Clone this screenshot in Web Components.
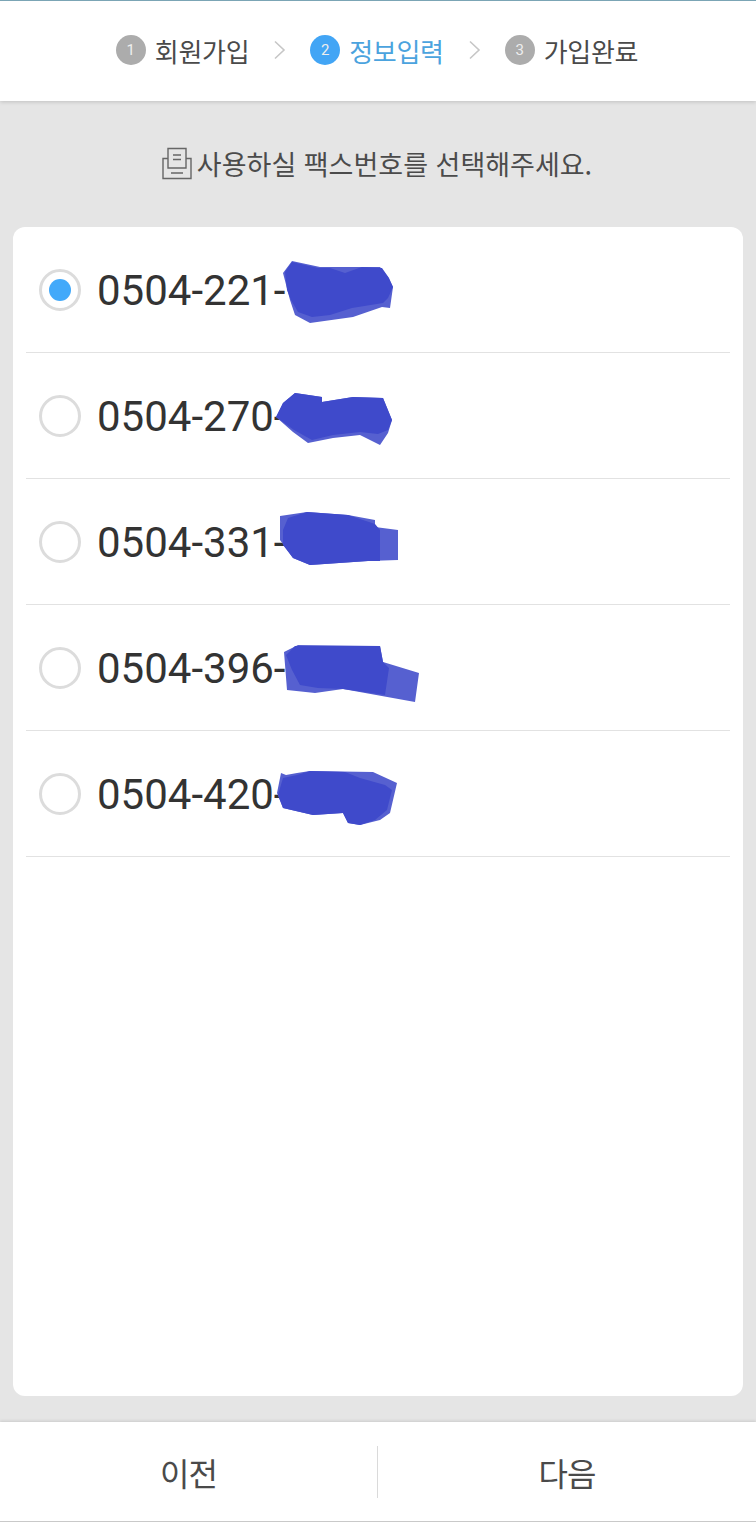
<!DOCTYPE html>
<html lang="ko">
<head>
<meta charset="utf-8">
<title>정보입력</title>
<style>
html, body { margin: 0; padding: 0; height: 100%; }
body { font-family: "Noto Sans CJK KR", Roboto, sans-serif; background: #e5e5e5; overflow: hidden; }
fax-app { height: 1522px; }
</style>
</head>
<body>
<fax-app>
  <wizard-header>
    <wizard-step num="1">회원가입</wizard-step>
    <step-arrow></step-arrow>
    <wizard-step num="2" active>정보입력</wizard-step>
    <step-arrow></step-arrow>
    <wizard-step num="3">가입완료</wizard-step>
  </wizard-header>
  <page-notice>사용하실 팩스번호를 선택해주세요.</page-notice>
  <fax-list>
    <fax-option checked top="227" scribble="292,261 320,267 380,267 388,277 393,287 390,308 382,307 353,317 310,323 295,315 290,300 283,273" core="292,262 318,268 330,268 345,273 362,267 382,268 389,278 393,287 388,298 383,303 352,308 330,315 312,317 298,312 291,300 287,290 285,272">0504-221-</fax-option>
    <fax-option top="353" scribble="295,393 322,397 322,402 353,397 383,398 392,420 388,433 380,445 360,435 333,438 308,443 293,432 276,417 283,403" core="295,393 322,397 322,402 353,397 383,398 392,420 388,430 378,434 360,432 333,435 312,440 294,430 276,417 283,403">0504-270-</fax-option>
    <fax-option top="479" scribble="280,516 307,512 348,515 375,520 375,527 398,530 398,560 368,561 310,565 293,558 280,540" core="288,518 307,512 348,515 360,519 375,524 380,530 380,561 368,561 310,565 293,558 283,545 283,530">0504-331-</fax-option>
    <fax-option top="605" scribble="284,652 298,645 380,646 383,662 419,673 415,702 343,689 315,693 287,690" core="295,646 380,646 383,662 389,668 385,695 343,689 318,688 300,685 292,670 286,655">0504-396-</fax-option>
    <fax-option top="731" scribble="281,773 286,775 297,773 310,771 373,772 397,783 390,813 380,820 360,825 348,823 343,813 313,815 283,808 277,793" core="283,778 297,775 310,771 345,772 360,778 385,785 392,790 387,810 375,820 360,825 348,823 343,813 313,815 283,808 278,795">0504-420-</fax-option>
  </fax-list>
  <bottom-bar>
    <bar-button>이전</bar-button>
    <bar-button>다음</bar-button>
  </bottom-bar>
</fax-app>

<script>
class FaxApp extends HTMLElement {
  constructor() {
    super();
    this.attachShadow({ mode: 'open' });
    this.shadowRoot.innerHTML = `
      <style>
        :host { display: flex; flex-direction: column; width: 756px; background: #e5e5e5; }
      </style>
      <slot></slot>`;
  }
}

class WizardHeader extends HTMLElement {
  constructor() {
    super();
    this.attachShadow({ mode: 'open' });
    this.shadowRoot.innerHTML = `
      <style>
        :host {
          display: flex; align-items: center; justify-content: center; gap: 24px;
          box-sizing: border-box; height: 101px; flex: none; padding: 0 2px 2px 0;
          background: #fff; border-top: 1px solid #7ba5b5;
          box-shadow: 0 1px 4px rgba(0,0,0,.16);
          position: relative; z-index: 1;
        }
      </style>
      <slot></slot>`;
  }
}

class WizardStep extends HTMLElement {
  constructor() {
    super();
    this.attachShadow({ mode: 'open' });
    this.shadowRoot.innerHTML = `
      <style>
        :host { display: flex; align-items: center; gap: 9px; color: #4a4a4a; font-size: 26px; letter-spacing: -.3px; }
        :host([active]) { color: #4ba3de; }
        .num {
          width: 30px; height: 30px; border-radius: 50%; background: #acacac; color: #eee;
          display: flex; align-items: center; justify-content: center;
          font: 15px Roboto, sans-serif; letter-spacing: 0;
        }
        :host([active]) .num { background: #42a5f5; }
      </style>
      <span class="num">${this.getAttribute('num')}</span>
      <slot></slot>`;
  }
}

class StepArrow extends HTMLElement {
  constructor() {
    super();
    this.attachShadow({ mode: 'open' });
    this.shadowRoot.innerHTML = `
      <style>:host { display: block; width: 13px; height: 20px; }</style>
      <svg width="13" height="20" viewBox="0 0 13 20" fill="none" stroke="#c6c6c6" stroke-width="1.6">
        <path d="M2 1.5 11 10 2 18.5"/>
      </svg>`;
  }
}

class PageNotice extends HTMLElement {
  constructor() {
    super();
    this.attachShadow({ mode: 'open' });
    this.shadowRoot.innerHTML = `
      <style>
        :host {
          display: flex; align-items: center; justify-content: center; gap: 5px;
          height: 126px; flex: none; padding: 0 2px 2px 0; box-sizing: border-box;
          color: #4b4b4b; font-size: 27px;
        }
        svg { flex: none; }
      </style>
      <svg width="30" height="33" viewBox="0 0 30 33" fill="none" stroke="#666" stroke-width="1.4">
        <path d="M6 11.5H1V31.5H29V11.5H24"/>
        <path d="M6 21V1.5H24V21H6Z"/>
        <path d="M11 8H19M11 12.5H19M9 26H21"/>
      </svg>
      <slot></slot>`;
  }
}

class FaxList extends HTMLElement {
  constructor() {
    super();
    this.attachShadow({ mode: 'open' });
    this.shadowRoot.innerHTML = `
      <style>
        :host {
          display: block; flex: 1; margin: 0 13px 26px; min-height: 0;
          background: #fff; border-radius: 12px;
        }
      </style>
      <slot></slot>`;
  }
}

class FaxOption extends HTMLElement {
  constructor() {
    super();
    this.attachShadow({ mode: 'open' });
    // 낙서 좌표는 스크린샷 기준이라 행 위치만큼 viewBox를 옮긴다
    const top = this.getAttribute('top');
    this.shadowRoot.innerHTML = `
      <style>
        :host {
          display: flex; align-items: center; gap: 16px; position: relative;
          box-sizing: border-box; height: 126px; margin: 0 13px; padding: 0 0 0 13px;
          border-bottom: 1px solid #e2e2e2;
          color: #333; font: 42px Roboto, sans-serif;
        }
        .radio {
          width: 42px; height: 42px; border-radius: 50%; box-sizing: border-box; flex: none;
          border: 3px solid #dcdcdc; display: flex; align-items: center; justify-content: center;
        }
        :host([checked]) .radio::after {
          content: ''; width: 22px; height: 22px; border-radius: 50%; background: #42a9fa;
        }
        .num { padding-top: 2px; }
        svg { position: absolute; left: 0; top: 0; overflow: visible; }
      </style>
      <span class="radio"></span>
      <span class="num"><slot></slot></span>
      <svg width="704" height="126" viewBox="26 ${top} 704 126">
        <polygon points="${this.getAttribute('scribble')}" fill="#5660d0"/>
        <polygon points="${this.getAttribute('core')}" fill="#3f4acb"/>
      </svg>`;
  }
}

class BottomBar extends HTMLElement {
  constructor() {
    super();
    this.attachShadow({ mode: 'open' });
    this.shadowRoot.innerHTML = `
      <style>
        :host {
          display: grid; grid-template-columns: 378px 1fr; align-items: center;
          box-sizing: border-box; height: 100px; flex: none;
          background: #fff; border-bottom: 1px solid #c9c9c9;
          box-shadow: 0 -1px 3px rgba(0,0,0,.12);
        }
      </style>
      <slot></slot>`;
  }
}

class BarButton extends HTMLElement {
  constructor() {
    super();
    this.attachShadow({ mode: 'open' });
    this.shadowRoot.innerHTML = `
      <style>
        :host {
          display: flex; align-items: center; justify-content: center;
          height: 52px; color: #4a4a4a; font-size: 32px; letter-spacing: -1px;
        }
        :host(:first-child) { border-right: 1px solid #dadada; }
      </style>
      <slot></slot>`;
  }
}

customElements.define('fax-app', FaxApp);
customElements.define('wizard-header', WizardHeader);
customElements.define('wizard-step', WizardStep);
customElements.define('step-arrow', StepArrow);
customElements.define('page-notice', PageNotice);
customElements.define('fax-list', FaxList);
customElements.define('fax-option', FaxOption);
customElements.define('bottom-bar', BottomBar);
customElements.define('bar-button', BarButton);
</script>
</body>
</html>
